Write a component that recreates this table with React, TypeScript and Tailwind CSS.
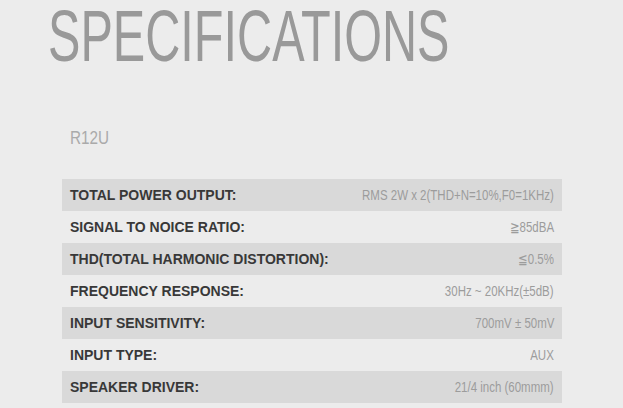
const specs: [string, string][] = [
  ['TOTAL POWER OUTPUT:', 'RMS 2W x 2(THD+N=10%,F0=1KHz)'],
  ['SIGNAL TO NOICE RATIO:', '≧85dBA'],
  ['THD(TOTAL HARMONIC DISTORTION):', '≦0.5%'],
  ['FREQUENCY RESPONSE:', '30Hz ~ 20KHz(±5dB)'],
  ['INPUT SENSITIVITY:', '700mV ± 50mV'],
  ['INPUT TYPE:', 'AUX'],
  ['SPEAKER DRIVER:', '21/4 inch (60mmm)'],
];

export default function App() {
  return (
    <div className="min-h-screen w-full overflow-hidden bg-[#ececec] pl-[48px] font-['Liberation_Sans',Arial,sans-serif]">
      <h1 className="w-max origin-left scale-x-[0.675] whitespace-nowrap text-[72px] leading-none text-[#999999]">
        SPECIFICATIONS
      </h1>

      <div className="pl-[14px]">
        <div className="mt-[57px] flex px-2">
          <span className="origin-left scale-x-[0.85] text-[18px] leading-[18px] text-[#aaaaaa]">
            R12U
          </span>
        </div>

        <div className="mt-[32px] w-[500px]">
          {specs.map(([label, value], i) => (
            <div
              key={label}
              className={
                'flex h-8 items-center justify-between px-2 ' +
                (i % 2 === 0 ? 'bg-[#d9d9d9]' : '')
              }
            >
              <span className="text-[14px] font-bold text-[#383838]">{label}</span>
              <span className="inline-block origin-right scale-x-[0.82] whitespace-nowrap text-[14px] text-[#9c9c9c]">
                {value}
              </span>
            </div>
          ))}
        </div>
      </div>
    </div>
  );
}
